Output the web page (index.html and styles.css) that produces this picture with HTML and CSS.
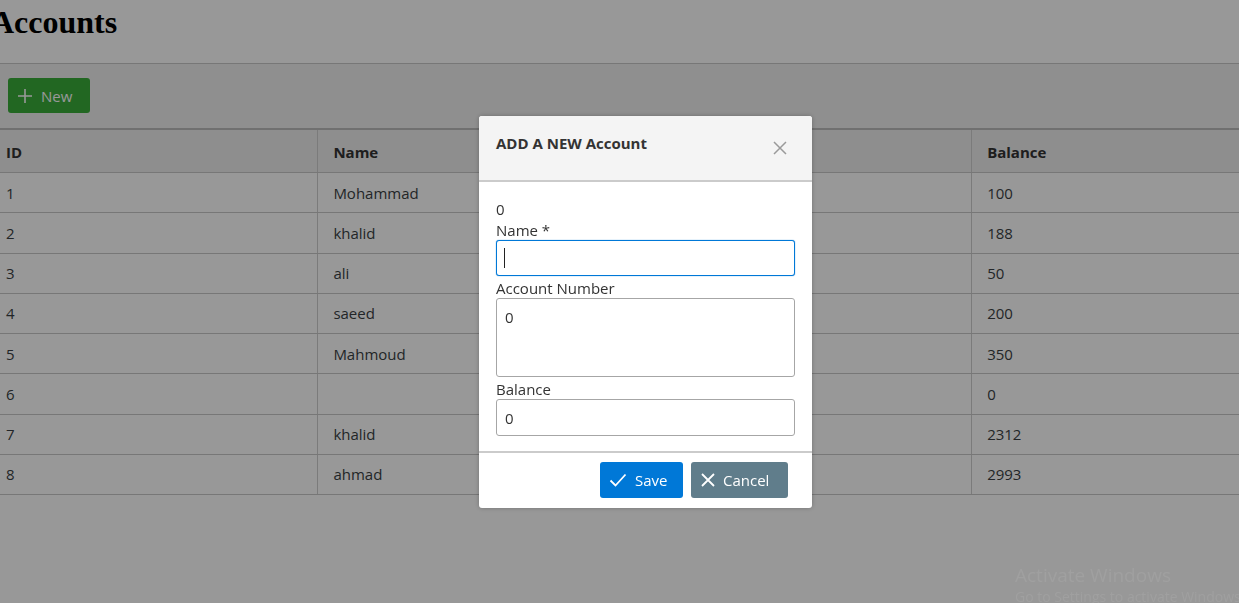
FILE: index.html
```html
<!DOCTYPE html>
<html>
<head>
<meta charset="utf-8">
<link rel="stylesheet" href="styles.css">
</head>
<body>
<div class="page">
  <h1 class="title">Accounts</h1>
  <div class="toolbar">
    <button class="btn btn-new">
      <svg class="ico" width="16" height="16" viewBox="0 0 16 16"><path d="M8 1v14M1 8h14" stroke="#fff" stroke-width="1.6" fill="none"/></svg>
      <span>New</span>
    </button>
  </div>
  <table class="grid">
    <thead>
      <tr><th>ID</th><th>Name</th><th>Account Number</th><th>Balance</th></tr>
    </thead>
    <tbody>
      <tr><td>1</td><td>Mohammad</td><td>1001</td><td>100</td></tr>
      <tr><td>2</td><td>khalid</td><td>1002</td><td>188</td></tr>
      <tr><td>3</td><td>ali</td><td>1003</td><td>50</td></tr>
      <tr><td>4</td><td>saeed</td><td>1004</td><td>200</td></tr>
      <tr><td>5</td><td>Mahmoud</td><td>1005</td><td>350</td></tr>
      <tr><td>6</td><td></td><td>0</td><td>0</td></tr>
      <tr><td>7</td><td>khalid</td><td>1007</td><td>2312</td></tr>
      <tr><td>8</td><td>ahmad</td><td>1008</td><td>2993</td></tr>
    </tbody>
  </table>
</div>

<div class="mask"></div>

<div class="dialog">
  <div class="dlg-head">
    <span class="dlg-title">ADD A NEW Account</span>
    <svg class="dlg-close" width="14" height="14" viewBox="0 0 14 14"><path d="M1 1l12 12M13 1L1 13" stroke="#9a9a9a" stroke-width="1.5" fill="none"/></svg>
  </div>
  <div class="dlg-body">
    <div class="id-val">0</div>
    <label class="lbl lbl-first">Name *</label>
    <div class="field">
      <input class="inp inp-focus" type="text" value="">
      <span class="caret"></span>
    </div>
    <label class="lbl">Account Number</label>
    <textarea class="inp area">0</textarea>
    <label class="lbl">Balance</label>
    <input class="inp inp-bal" type="text" value="0">
  </div>
  <div class="dlg-foot">
    <button class="btn btn-save">
      <svg class="ico" width="18" height="14" viewBox="0 0 18 14"><path d="M1.5 7.5l5 5L16.5 1.5" stroke="#fff" stroke-width="1.8" fill="none"/></svg>
      <span>Save</span>
    </button>
    <button class="btn btn-cancel">
      <svg class="ico" width="14" height="14" viewBox="0 0 14 14"><path d="M1 1l12 12M13 1L1 13" stroke="#fff" stroke-width="1.8" fill="none"/></svg>
      <span>Cancel</span>
    </button>
  </div>
</div>

<div class="watermark">
  <div class="wm-big">Activate Windows</div>
  <div class="wm-small">Go to Settings to activate Windows.</div>
</div>
</body>
</html>
```

FILE: styles.css
```css
html, body {
  margin: 0;
  padding: 0;
  background: #ffffff;
  overflow: hidden;
  width: 1239px;
  height: 603px;
}

body {
  font-family: "Open Sans", "Noto Sans", sans-serif;
  font-size: 15px;
  color: #495057;
}

.page {
  margin-left: -9px;
  width: 1308px;
}

.title {
  margin: 0;
  height: 59px;
  padding-top: 4px;
  font-family: "Liberation Serif", "Times New Roman", serif;
  font-weight: bold;
  font-size: 32px;
  line-height: 36px;
  color: #000;
  border-bottom: 1px solid #c8c8c8;
}

.toolbar {
  background: #f0f0f0;
  padding: 14px 17px 15px;
  height: 35px;
  border-bottom: 2px solid #bdbdbd;
}

.btn {
  display: inline-flex;
  align-items: center;
  height: 35px;
  border: none;
  border-radius: 3px;
  color: #fff;
  font-family: "Open Sans", "Noto Sans", sans-serif;
  font-size: 15px;
  padding: 0 10px;
  gap: 8px;
  cursor: pointer;
}

.btn-new {
  background: #39ae3a;
  width: 82px;
  padding-left: 9px;
}

.grid {
  width: 1308px;
  border-collapse: collapse;
  table-layout: fixed;
}

.grid th,
.grid td {
  text-align: left;
  padding: 0 15px;
  border-right: 1px solid #cfcfcf;
  border-bottom: 1px solid #c8c8c8;
  color: #3a3f44;
}

.grid th {
  background: #eeeeee;
  height: 40px;
  padding-top: 2px;
  font-weight: 700;
  color: #333;
}

.grid td {
  height: 39.25px;
  background: #fff;
}

.mask {
  position: fixed;
  inset: 0;
  background: rgba(0, 0, 0, 0.405);
}

.dialog {
  position: fixed;
  left: 479px;
  top: 116px;
  width: 333px;
  background: #fff;
  border-radius: 3px;
  box-shadow: 0 0 5px rgba(0, 0, 0, 0.25);
  overflow: hidden;
}

.dlg-head {
  background: #f4f4f4;
  height: 64px;
  border-bottom: 2px solid #cbcbcb;
  display: flex;
  justify-content: space-between;
  align-items: flex-start;
  padding: 0 25px 0 17px;
}

.dlg-title {
  font-weight: 700;
  color: #333;
  font-size: 15px;
  line-height: 20px;
  margin-top: 17px;
}

.dlg-close {
  margin-top: 25px;
}

.dlg-body {
  padding: 16px 17px 15px;
  display: flex;
  flex-direction: column;
  color: #333;
  border-bottom: 2px solid #cbcbcb;
}

.id-val {
  line-height: 22px;
}

.lbl {
  line-height: 20px;
  margin-top: 2px;
}

.lbl-first {
  margin-top: 0;
}

.field {
  position: relative;
}

.inp {
  box-sizing: border-box;
  width: 299px;
  height: 36px;
  border: 1px solid #a6a6a6;
  border-radius: 3px;
  padding: 0 8px;
  font-family: "Open Sans", "Noto Sans", sans-serif;
  font-size: 15px;
  color: #333;
  background: #fff;
  outline: none;
  display: block;
}

.inp-focus {
  border-color: #0078d7;
  box-shadow: 0 0 1px 0 #0078d7;
}

.caret {
  position: absolute;
  left: 8px;
  top: 8px;
  width: 1px;
  height: 20px;
  background: #222;
}

.area {
  height: 79px;
  resize: none;
  padding-top: 8px;
  line-height: 20px;
}

.inp-bal {
  height: 37px;
}

.dlg-foot {
  display: flex;
  justify-content: flex-end;
  gap: 8px;
  padding: 9px 24px 10px;
}

.btn-save {
  background: #0078d7;
  width: 83px;
  height: 36px;
  padding-left: 9px;
}

.btn-cancel {
  background: #607d8b;
  width: 97px;
  height: 36px;
  padding-left: 10px;
}

.watermark {
  position: fixed;
  left: 1015px;
  top: 562px;
  color: rgba(255, 255, 255, 0.08);
  font-family: "Open Sans", "Noto Sans", sans-serif;
  white-space: nowrap;
}

.wm-big {
  font-size: 19px;
  line-height: 26px;
}

.wm-small {
  font-size: 14px;
  line-height: 18px;
}
```
